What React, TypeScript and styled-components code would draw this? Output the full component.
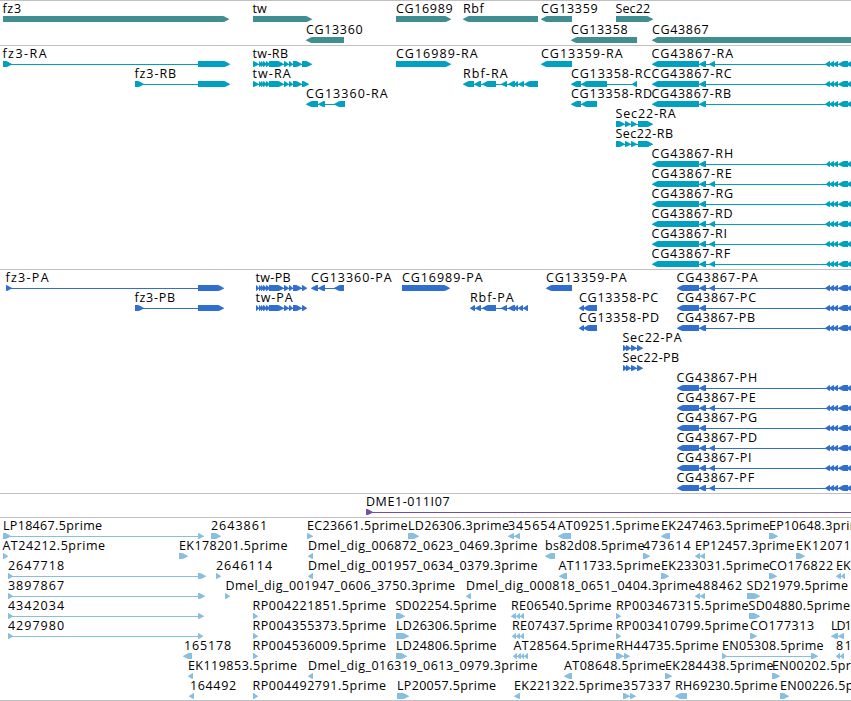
import styled, { createGlobalStyle } from 'styled-components';

const GlobalStyle = createGlobalStyle`
  body {
    margin: 0;
    background: #fff;
    overflow: hidden;
  }
`;

const Browser = styled.main`
  width: 851px;
  height: 701px;
  overflow: hidden;
  display: flex;
  flex-direction: column;
  background: #fff;
`;

const Track = styled.section<{ $color: string; $pad: number }>`
  border-top: 1px solid #c0c0c0;
  padding-bottom: ${(p) => p.$pad}px;
  color: ${(p) => p.$color};

  &:last-child {
    border-bottom: 1px solid #c0c0c0;
  }
`;

const Row = styled.svg<{ $height: number }>`
  display: block;
  width: 851px;
  height: ${(p) => p.$height}px;
  overflow: visible;
`;

const Label = styled.text`
  font-family: 'Open Sans', 'DejaVu Sans', sans-serif;
  font-size: 12.5px;
  fill: #000;
`;

const Exon = styled.polygon`
  fill: currentColor;
`;

const Intron = styled.rect`
  fill: currentColor;
  shape-rendering: crispEdges;
`;

type Span = [number, number];

// name, label start, label end, strand, exons
type Feature = [string, number, number, 1 | -1, Span[]];

interface TrackData {
  id: string;
  color: string;
  rowHeight: number;
  pad: number;
  rows: Feature[][];
}

const exonPoints = ([start, end]: Span, strand: 1 | -1) => {
  const head = Math.min(6, end - start);
  const tip = strand === 1 ? end : start;
  const tail = strand === 1 ? start : end;
  const neck = tip - strand * head;
  return `${tail},15 ${neck},15 ${neck + (strand * head) / 4},15.4 ${tip},18 ${tip},18.6 ${neck + (strand * head) / 4},20.8 ${neck},21 ${tail},21`;
};

const Glyph = ({ feature }: { feature: Feature }) => {
  const [name, x, end, strand, exons] = feature;
  const first = exons[0][0];
  const last = exons[exons.length - 1][1];
  return (
    <g>
      <Label x={x - 0.6} y={12} textLength={end - x + 1.2}>{name}</Label>
      {exons.length > 1 && <Intron x={first + 1} y={18} width={last - first - 2} height={1} />}
      {exons.map((exon) => (
        <Exon key={exon[0]} points={exonPoints(exon, strand)} />
      ))}
    </g>
  );
};

const twStart: Span[] = [[259, 262], [261, 264], [263, 267], [266, 270], [269, 284], [284, 289], [289, 293], [293, 302]];
const rbfMiddle: Span[] = [[482, 496], [501, 507], [508, 515], [514, 518]];

// the 3' exon starts at a different place in transcripts and proteins
const cg43867 = (suffix: string, x: number, end: number, short: boolean, cluster: number): Feature => [
  `CG43867-${suffix}`,
  x,
  end,
  -1,
  [
    [x, 699],
    [699, 706],
    ...(short ? [[709, 715] as Span] : []),
    [cluster, 830],
    [829, 834],
    [833, 838],
    [838, 848],
    [846, 856],
  ],
];

const rp = (id: string): Feature => [`RP00${id}.5prime`, 253, 385.5, 1, [[253, 258]]];

const tracks: TrackData[] = [
  {
    id: 'gene',
    color: '#408e92',
    rowHeight: 21,
    pad: 2,
    rows: [
      [
        ['fz3', 3, 20.5, 1, [[3, 229]]],
        ['tw', 253, 266, 1, [[253, 312]]],
        ['CG16989', 396.5, 452, 1, [[396, 451]]],
        ['Rbf', 463.5, 483, -1, [[463, 538]]],
        ['CG13359', 541.5, 597, -1, [[541, 572]]],
        ['Sec22', 616, 649.5, 1, [[616, 653]]],
      ],
      [
        ['CG13360', 306.5, 362, -1, [[306, 344]]],
        ['CG13358', 571.5, 627, -1, [[571, 637]]],
        ['CG43867', 652.5, 708, -1, [[652, 860]]],
      ],
    ],
  },
  {
    id: 'transcript',
    color: '#00a0c0',
    rowHeight: 20,
    pad: 3,
    rows: [
      [
        ['fz3-RA', 3, 46, 1, [[3, 12], [198, 230]]],
        ['tw-RB', 253, 287.5, 1, [[253, 259], ...twStart, [302, 312]]],
        ['CG16989-RA', 396.5, 477, 1, [[396, 451]]],
        ['CG13359-RA', 541.5, 622, -1, [[541, 572]]],
        cg43867('RA', 652, 732.5, true, 825),
      ],
      [
        ['fz3-RB', 135, 175.5, 1, [[135, 144], [198, 230]]],
        ['tw-RA', 253, 290, 1, [[253, 259], ...twStart, [302, 309]]],
        ['Rbf-RA', 463.5, 507, -1, [[463, 474], [474, 481], ...rbfMiddle, [518, 524], [524, 538]]],
        ['CG13358-RC', 571.5, 650.5, -1, [[571, 581], [581, 607], [632, 637]]],
        cg43867('RC', 652, 731, false, 825),
      ],
      [
        ['CG13360-RA', 306.5, 387, -1, [[306, 318], [318, 325], [334, 345]]],
        ['CG13358-RD', 571.5, 651.5, -1, [[571, 581], [581, 597]]],
        cg43867('RB', 652, 730.5, false, 825),
      ],
      [['Sec22-RA', 616, 675, 1, [[616, 625], [625, 631], [631, 637], [638, 653]]]],
      [['Sec22-RB', 616, 672.5, 1, [[616, 625], [625, 631], [631, 637], [638, 653]]]],
      [cg43867('RH', 652, 732.5, false, 826)],
      [cg43867('RE', 652, 731, true, 826)],
      [cg43867('RG', 652, 732.5, false, 825)],
      [cg43867('RD', 652, 732, true, 825)],
      [cg43867('RI', 652, 726.5, true, 825)],
      [cg43867('RF', 652, 729.5, true, 826)],
    ],
  },
  {
    id: 'protein',
    color: '#306ecf',
    rowHeight: 20,
    pad: 3,
    rows: [
      [
        ['fz3-PA', 6, 48, 1, [[6, 12], [198, 224]]],
        ['tw-PB', 256, 290, 1, [[256, 259], ...twStart, [302, 307]]],
        ['CG13360-PA', 311.5, 391, -1, [[311, 318], [318, 325], [334, 344]]],
        ['CG16989-PA', 402.5, 482, 1, [[402, 450]]],
        ['CG13359-PA', 546.5, 626, -1, [[546, 572]]],
        cg43867('PA', 677, 757, true, 825),
      ],
      [
        ['fz3-PB', 135, 174.5, 1, [[135, 144], [198, 224]]],
        ['tw-PA', 256, 292, 1, [[256, 259], ...twStart, [302, 307]]],
        ['Rbf-PA', 470.5, 513, -1, [[470, 475], [475, 481], ...rbfMiddle, [518, 523], [523, 528]]],
        ['CG13358-PC', 579.5, 657.5, -1, [[579, 584], [583, 597]]],
        cg43867('PC', 677, 755.5, false, 825),
      ],
      [
        ['CG13358-PD', 579.5, 658.5, -1, [[579, 584], [583, 597]]],
        cg43867('PB', 677, 754.5, false, 825),
      ],
      [['Sec22-PA', 623, 681, 1, [[623, 627], [626, 631], [631, 637], [637, 643]]]],
      [['Sec22-PB', 623, 678.5, 1, [[623, 627], [626, 631], [631, 637], [637, 643]]]],
      [cg43867('PH', 677, 756.5, false, 826)],
      [cg43867('PE', 677, 755, true, 826)],
      [cg43867('PG', 677, 756.5, false, 825)],
      [cg43867('PD', 677, 756.5, true, 825)],
      [cg43867('PI', 677, 751, true, 825)],
      [cg43867('PF', 677, 753.5, true, 825)],
    ],
  },
  {
    id: 'clone',
    color: '#7050a8',
    rowHeight: 20,
    pad: 3,
    rows: [[['DME1-011I07', 366.5, 449, 1, [[366, 373], [860, 870]]]]],
  },
  {
    id: 'est',
    color: '#88bfe0',
    rowHeight: 20,
    pad: 2,
    rows: [
      [
        ['LP18467.5prime', 3.5, 101.5, 1, [[3, 11], [198, 204]]],
        ['2643861', 211.5, 266.5, 1, [[211, 221]]],
        ['EC23661.5prime', 307.5, 407, 1, [[307, 313]]],
        ['LD26306.3prime', 408.5, 508.5, 1, [[408, 419]]],
        ['345654', 508.5, 555, -1, [[508, 514], [514, 520]]],
        ['AT09251.5prime', 558, 659, -1, [[558, 571]]],
        ['EK247463.5prime', 661.5, 769, -1, [[661, 670]]],
        ['EP10648.3prime', 769.5, 868, 1, [[769, 778]]],
      ],
      [
        ['AT24212.5prime', 3, 104.5, 1, [[3, 8]]],
        ['EK178201.5prime', 179.5, 287, 1, [[179, 188]]],
        ['Dmel_dig_006872_0623_0469.3prime', 308.5, 537, -1, [[308, 313]]],
        ['bs82d08.5prime', 545.5, 644, -1, [[545, 555]]],
        ['473614', 643.5, 690, 1, [[643, 650]]],
        ['EP12457.3prime', 695.5, 794, -1, [[695, 700], [700, 705]]],
        ['EK12071', 796.5, 850, 1, [[796, 805]]],
      ],
      [
        ['2647718', 8.5, 63.5, 1, [[8, 13], [198, 206]]],
        ['2646114', 216.5, 271.5, 1, [[216, 221]]],
        ['Dmel_dig_001957_0634_0379.3prime', 308.5, 537, -1, [[308, 313]]],
        ['AT11733.5prime', 559, 660, -1, [[559, 567]]],
        ['EK233031.5prime', 661.5, 769, 1, [[661, 669]]],
        ['CO176822', 769.5, 832.5, 1, [[769, 777]]],
        ['EK', 836.5, 850, -1, [[836, 841], [841, 845]]],
      ],
      [
        ['3897867', 8.5, 63.5, 1, [[8, 13], [198, 205]]],
        ['Dmel_dig_001947_0606_3750.3prime', 226, 454.5, 1, [[225, 230]]],
        ['Dmel_dig_000818_0651_0404.3prime', 466.5, 695, -1, [[466, 471]]],
        ['488462', 695.5, 741.5, -1, [[695, 700], [700, 705]]],
        ['SD21979.5prime', 747, 847.5, 1, [[747, 760]]],
      ],
      [
        ['4342034', 8.5, 63.5, 1, [[8, 13], [198, 204]]],
        rp('4221851'),
        ['SD02254.5prime', 396, 496, 1, [[396, 405]]],
        ['RE06540.5prime', 511.5, 611, -1, [[511, 516], [516, 520], [520, 524]]],
        ['RP003467315.5prime', 616.5, 748, 1, [[616, 621]]],
        ['SD04880.5prime', 749, 849.5, 1, [[749, 760]]],
      ],
      [
        ['4297980', 8.5, 63.5, 1, [[8, 13], [198, 203]]],
        rp('4355373'),
        ['LD26306.5prime', 396.5, 496, 1, [[396, 409]]],
        ['RE07437.5prime', 512.5, 612, -1, [[512, 516], [516, 520], [520, 524]]],
        ['RP003410799.5prime', 616.5, 748, 1, [[616, 621]]],
        ['CO177313', 750.5, 813.5, 1, [[750, 757]]],
        ['LD1', 831.5, 851, -1, [[831, 838], [838, 844]]],
      ],
      [
        ['165178', 184.5, 230.5, -1, [[183, 192]]],
        rp('4536009'),
        ['LD24806.5prime', 396.5, 496, 1, [[396, 407]]],
        ['AT28564.5prime', 514, 614.5, -1, [[513, 517], [517, 521], [521, 524], [524, 528]]],
        ['RH44735.5prime', 616.5, 718, 1, [[616, 624], [624, 630]]],
        ['EN05308.5prime', 722.5, 823, 1, [[722, 727], [811, 818]]],
        ['81', 836.5, 851, -1, [[836, 840], [840, 844]]],
      ],
      [
        ['EK119853.5prime', 188.5, 296.5, -1, [[188, 193]]],
        ['Dmel_dig_016319_0613_0979.3prime', 308.5, 537, -1, [[308, 313]]],
        ['AT08648.5prime', 564.5, 665, -1, [[564, 572]]],
        ['EK284438.5prime', 665.5, 773, 1, [[665, 672]]],
        ['EN00202.5prime', 772.5, 873, 1, [[772, 780]]],
      ],
      [
        ['164492', 190.5, 235.5, -1, [[189, 194]]],
        rp('4492791'),
        ['LP20057.5prime', 397.5, 495.5, 1, [[397, 409]]],
        ['EK221322.5prime', 514.5, 622, -1, [[514, 520]]],
        ['357337', 623.5, 670, 1, [[623, 630], [630, 636]]],
        ['RH69230.5prime', 675.5, 777, -1, [[675, 687]]],
        ['EN00226.5prime', 780.5, 881, 1, [[780, 789]]],
      ],
    ],
  },
];

const App = () => (
  <Browser>
    <GlobalStyle />
    {tracks.map((track) => (
      <Track key={track.id} $color={track.color} $pad={track.pad}>
        {track.rows.map((row, i) => (
          <Row key={i} $height={track.rowHeight}>
            {row.map((feature) => (
              <Glyph key={feature[0]} feature={feature} />
            ))}
          </Row>
        ))}
      </Track>
    ))}
  </Browser>
);

export default App;
